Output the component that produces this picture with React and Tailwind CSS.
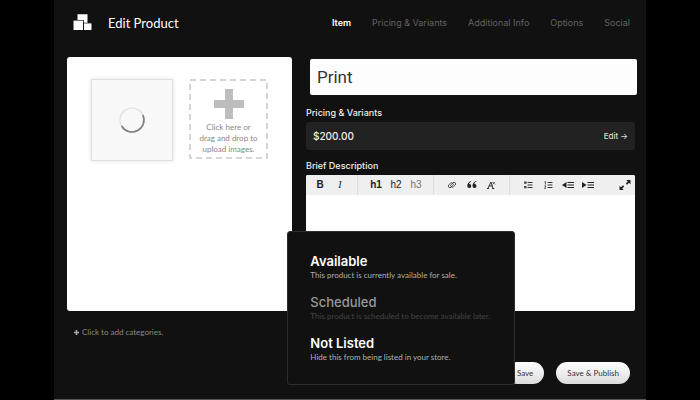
import React, { useState } from 'react';

const tabs = [
  { id: 'item', name: 'Item' },
  { id: 'pricing', name: 'Pricing & Variants' },
  { id: 'info', name: 'Additional Info' },
  { id: 'options', name: 'Options' },
  { id: 'social', name: 'Social' },
];

const statuses = [
  { id: 'available', name: 'Available', desc: 'This product is currently available for sale.' },
  { id: 'scheduled', name: 'Scheduled', desc: 'This product is scheduled to become available later.', muted: true },
  { id: 'hidden', name: 'Not Listed', desc: 'Hide this from being listed in your store.' },
];

const Logo = () => (
  <svg width="20" height="17" viewBox="0 0 20 17" fill="#fff" aria-hidden="true">
    <path d="M4.5 0.2h10v8.6h-3.7V6H4.5z" />
    <path d="M0.5 6.6H10V16H0.5z" />
    <path d="M11 9.4h7.5V16H11z" />
  </svg>
);

const Spinner = () => (
  <svg width="28" height="28" viewBox="0 0 28 28" fill="none" aria-hidden="true">
    <circle cx="14" cy="14" r="12" stroke="#dedede" strokeWidth="1.2" />
    <path d="M24.8 8.8A12 12 0 0 1 3.6 20" stroke="#808080" strokeWidth="1.6" />
  </svg>
);

const LinkIcon = () => (
  <svg width="10" height="10" viewBox="0 0 10 10" fill="none" stroke="#444" strokeWidth="0.9" aria-hidden="true">
    <rect x="1" y="3.6" width="5.6" height="3.2" rx="1.6" transform="rotate(-45 3.8 5.2)" />
    <rect x="3.4" y="3.2" width="5.6" height="3.2" rx="1.6" transform="rotate(-45 6.2 4.8)" />
  </svg>
);

const QuoteIcon = () => (
  <svg width="10" height="8" viewBox="0 0 10 8" fill="#222" aria-hidden="true">
    <path d="M4.3 0.6C2.9 1.2 2.3 2 2.2 3.1a2 2 0 1 1-1.9 2C0.2 2.7 1.6 0.7 4 0z" />
    <path d="M9.5 0.6C8.1 1.2 7.5 2 7.4 3.1a2 2 0 1 1-1.9 2C5.4 2.7 6.8 0.7 9.2 0z" />
  </svg>
);

const ClearIcon = () => (
  <svg width="10" height="8" viewBox="0 0 10 8" fill="none" stroke="#333" aria-hidden="true">
    <path d="M0.8 7.5L4 1l2 6.5M2 5h3.5M0 7.5h2M5 7.5h2.3" />
    <path d="M5.5 1l2.4 2.4M7.9 1L5.5 3.4" strokeWidth="0.8" />
  </svg>
);

const BulletsIcon = () => (
  <svg width="9" height="8" viewBox="0 0 9 8" fill="none" stroke="#333" aria-hidden="true">
    <path d="M3.5 1.5h5M3.5 4h5M3.5 6.5h5" />
    <rect x="0.6" y="0.9" width="1.5" height="1.5" strokeWidth="0.8" />
    <rect x="0.6" y="5.4" width="1.5" height="1.5" strokeWidth="0.8" />
  </svg>
);

const NumbersIcon = () => (
  <svg width="9" height="8" viewBox="0 0 9 8" fill="none" stroke="#333" aria-hidden="true">
    <path d="M3.5 1.5h5M3.5 4h5M3.5 6.5h5" />
    <path d="M0.4 1l1-0.5v3M0.3 4.8h1.3v1.2L0.4 7.4h1.5" strokeWidth="0.8" />
  </svg>
);

const OutdentIcon = () => (
  <svg width="12" height="8" viewBox="0 0 12 8" aria-hidden="true">
    <path d="M4.5 1v6L0 4z" fill="#222" />
    <path d="M5.5 1.5h6.5M5.5 4h6.5M5.5 6.5h6.5" stroke="#222" />
  </svg>
);

const IndentIcon = () => (
  <svg width="12" height="8" viewBox="0 0 12 8" aria-hidden="true">
    <path d="M0 1v6l4.5-3z" fill="#222" />
    <path d="M5.5 1.5h6.5M5.5 4h6.5M5.5 6.5h6.5" stroke="#222" />
  </svg>
);

const ExpandIcon = () => (
  <svg width="12" height="12" viewBox="0 0 12 12" fill="#222" aria-hidden="true">
    <path d="M7.3 1h4.2v4.2L10 3.7 8 5.7 6.8 4.5l2-2z" />
    <path d="M4.7 11H0.5V6.8L2 8.3l2-2 1.2 1.2-2 2z" />
  </svg>
);

const toolGroups = [
  [
    { id: 'Bold', icon: <span className="font-bold">B</span> },
    { id: 'Italic', icon: <span className="font-['Liberation_Serif',serif] italic">I</span> },
  ],
  [
    { id: 'Heading 1', icon: <span className="font-bold">h1</span> },
    { id: 'Heading 2', icon: <span>h2</span> },
    { id: 'Heading 3', icon: <span className="text-[#777]">h3</span> },
  ],
  [
    { id: 'Link', icon: <LinkIcon /> },
    { id: 'Quote', icon: <QuoteIcon /> },
    { id: 'Clear formatting', icon: <ClearIcon /> },
  ],
  [
    { id: 'Bulleted list', icon: <BulletsIcon /> },
    { id: 'Numbered list', icon: <NumbersIcon /> },
    { id: 'Outdent', icon: <OutdentIcon /> },
    { id: 'Indent', icon: <IndentIcon /> },
  ],
];

const Toolbar = () => (
  <div className="flex h-5 items-center bg-[#efefef] pr-1 text-[10px] leading-3 text-[#222] font-['Liberation_Sans',sans-serif]">
    {toolGroups.map((group, i) => (
      <div
        key={i}
        className={`flex h-full items-center pr-[7px] ${i === 0 ? 'pl-1' : 'pl-2'} ${i < 3 ? 'border-r border-[#dcdcdc]' : ''}`}
      >
        {group.map((tool) => (
          <button key={tool.id} type="button" aria-label={tool.id} className="flex h-full w-5 items-center justify-center">
            {tool.icon}
          </button>
        ))}
      </div>
    ))}
    <button type="button" aria-label="Full screen" className="ml-auto">
      <ExpandIcon />
    </button>
  </div>
);

const StatusMenu = ({ onSelect }) => (
  <div className="absolute right-[29px] -bottom-px flex w-[228px] flex-col gap-[13px] rounded-[3px] border border-[#2c2c2c] bg-[#111] px-[22px] pt-[21px] pb-[21px]">
    {statuses.map((status) => (
      <button key={status.id} type="button" onClick={() => onSelect(status.id)} className="block text-left whitespace-nowrap">
        <span
          className={`block font-['Inter',sans-serif] text-[13px] leading-4 ${status.muted ? 'font-medium text-[#999]' : 'font-semibold text-white'}`}
        >
          {status.name}
        </span>
        <span className={`block text-[8px] leading-3 ${status.muted ? 'text-[#444]' : 'text-[#b0b0b0]'}`}>
          {status.desc}
        </span>
      </button>
    ))}
  </div>
);

export default function App() {
  const [tab, setTab] = useState('item');
  const [title, setTitle] = useState('Print');
  const [description, setDescription] = useState('');
  const [, setStatus] = useState('available');

  return (
    <div className="min-h-screen bg-black px-[54px] font-['Lato',sans-serif]">
      <div className="flex min-h-screen flex-col border-b border-[#555] bg-[#111] pr-[9px] pb-[15px] pl-[13px]">
        <header className="flex h-[57px] items-center pr-[7px] pb-3 pl-[6px]">
          <Logo />
          <h1 className="ml-[15px] text-[13px] leading-4 text-white">Edit Product</h1>
          <nav className="ml-auto flex gap-[21px] font-['Inter',sans-serif] text-[9px] leading-3 whitespace-nowrap">
            {tabs.map((t) => (
              <a
                key={t.id}
                href={`#${t.id}`}
                onClick={() => setTab(t.id)}
                className={tab === t.id ? 'font-semibold text-white' : 'text-[#626262]'}
              >
                {t.name}
              </a>
            ))}
          </nav>
        </header>

        <main className="grid grid-cols-[225fr_331fr] gap-[14px]">
          {/* Images */}
          <section className="flex items-start gap-4 rounded-[3px] bg-white px-6 pt-[22px]">
            <div className="flex size-[82px] shrink-0 items-center justify-center border border-[#e0e0e0] bg-[#f8f8f8] shadow-[0_0_4px_#ddd]">
              <Spinner />
            </div>
            <button type="button" className="shrink-0 text-[8px] leading-[11px] text-[#888]">
              <span className="relative flex h-[80px] w-[79px] flex-col items-center pt-[10px]">
                <svg className="absolute inset-0 size-full" fill="none" aria-hidden="true">
                  <rect x="1" y="1" width="77" height="78" stroke="#c8c8c8" strokeWidth="1.5" strokeDasharray="6 4" />
                </svg>
                <svg width="30" height="30" viewBox="0 0 30 30" fill="#bdbdbd" aria-hidden="true">
                  <path d="M11 0h8v11h11v8H19v11h-8V19H0v-8h11z" />
                </svg>
                <span className="mt-[3px] whitespace-nowrap">
                  Click here or
                  <br />
                  drag and drop to
                  <br />
                  upload images.
                </span>
              </span>
            </button>
          </section>

          {/* Details */}
          <section className="flex flex-col pr-[2px]">
            <input
              aria-label="Product name"
              value={title}
              onChange={(e) => setTitle(e.target.value)}
              className="mt-[2px] -mr-[2px] ml-1 h-9 rounded-[2px] bg-[#fdfdfd] px-[7px] font-['Roboto',sans-serif] text-[17px] text-[#333]"
            />
            <h2 className="mt-3 font-['Inter',sans-serif] text-[9px] leading-3 font-medium text-[#eee]">
              Pricing &amp; Variants
            </h2>
            <div className="mt-[3px] flex h-7 items-center justify-between rounded-[2px] bg-[#222] px-[7px] font-['Inter',sans-serif]">
              <span className="text-[10px] font-medium text-[#eee]">$200.00</span>
              <a href="#pricing" className="text-[8px] font-medium text-[#ddd]">Edit →</a>
            </div>
            <label
              htmlFor="description"
              className="mt-[10px] font-['Inter',sans-serif] text-[9px] leading-3 font-medium text-[#eee]"
            >
              Brief Description
            </label>
            <div className="mt-[3px] flex flex-col overflow-hidden rounded-[2px] bg-white">
              <Toolbar />
              <textarea
                id="description"
                value={description}
                onChange={(e) => setDescription(e.target.value)}
                className="h-[116px] resize-none p-2 text-xs text-[#222] outline-none"
              />
            </div>
          </section>
        </main>

        <button type="button" className="mt-[15px] ml-[7px] flex items-center gap-[3px] self-start text-[8px] leading-3 text-[#8a8a8a]">
          <svg width="5" height="5" viewBox="0 0 5 5" stroke="#aaa" strokeWidth="1.6" aria-hidden="true">
            <path d="M2.5 0v5M0 2.5h5" />
          </svg>
          Click to add categories.
        </button>

        <footer className="mt-auto flex justify-end gap-3 pr-[7px] text-[8px] leading-3 text-[#333]">
          <div className="relative">
            <button type="button" className="h-[22px] rounded-full bg-linear-to-b from-white to-[#dcdcdc] px-[11px]">
              Save
            </button>
            <StatusMenu onSelect={setStatus} />
          </div>
          <button type="button" className="h-[22px] rounded-full bg-linear-to-b from-white to-[#dcdcdc] px-[11px]">
            Save &amp; Publish
          </button>
        </footer>
      </div>
    </div>
  );
}
